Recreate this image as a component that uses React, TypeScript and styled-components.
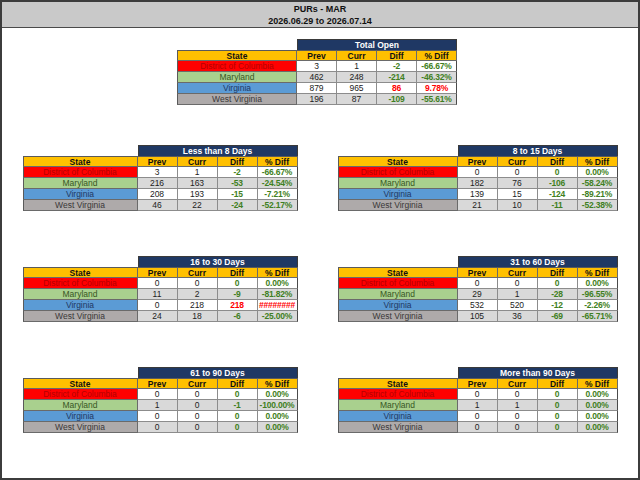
import React from "react";
import styled, { createGlobalStyle } from "styled-components";

const GlobalStyle = createGlobalStyle`
  html, body { margin: 0; padding: 0; background: #ffffff; }
  body { font-family: "Liberation Sans", Arial, sans-serif; }
  * { box-sizing: border-box; }
`;

type Row = { prev: string; curr: string; diff: string; pct: string };
type TableData = { title: string; rows: Row[] };

const STATES = [
  { name: "District of Columbia", bg: "#ff0000", fg: "#b40000" },
  { name: "Maryland", bg: "#a9d08e", fg: "#375623" },
  { name: "Virginia", bg: "#5b9bd5", fg: "#1f3864" },
  { name: "West Virginia", bg: "#aeaaaa", fg: "#3a3838" },
];

const r = (prev: string, curr: string, diff: string, pct: string): Row => ({ prev, curr, diff, pct });

const TOTAL: TableData = {
  title: "Total Open",
  rows: [r("3", "1", "-2", "-66.67%"), r("462", "248", "-214", "-46.32%"), r("879", "965", "86", "9.78%"), r("196", "87", "-109", "-55.61%")],
};

const BUCKETS: TableData[] = [
  { title: "Less than 8 Days", rows: [r("3", "1", "-2", "-66.67%"), r("216", "163", "-53", "-24.54%"), r("208", "193", "-15", "-7.21%"), r("46", "22", "-24", "-52.17%")] },
  { title: "8 to 15 Days", rows: [r("0", "0", "0", "0.00%"), r("182", "76", "-106", "-58.24%"), r("139", "15", "-124", "-89.21%"), r("21", "10", "-11", "-52.38%")] },
  { title: "16 to 30 Days", rows: [r("0", "0", "0", "0.00%"), r("11", "2", "-9", "-81.82%"), r("0", "218", "218", "########"), r("24", "18", "-6", "-25.00%")] },
  { title: "31 to 60 Days", rows: [r("0", "0", "0", "0.00%"), r("29", "1", "-28", "-96.55%"), r("532", "520", "-12", "-2.26%"), r("105", "36", "-69", "-65.71%")] },
  { title: "61 to 90 Days", rows: [r("0", "0", "0", "0.00%"), r("1", "0", "-1", "-100.00%"), r("0", "0", "0", "0.00%"), r("0", "0", "0", "0.00%")] },
  { title: "More than 90 Days", rows: [r("0", "0", "0", "0.00%"), r("1", "1", "0", "0.00%"), r("0", "0", "0", "0.00%"), r("0", "0", "0", "0.00%")] },
];

const Frame = styled.div`
  width: 640px;
  height: 480px;
  border: 2px solid #3c3c3c;
  display: flex;
  flex-direction: column;
  background: #ffffff;
`;

const Header = styled.header`
  height: 26px;
  background: #c9c9c9;
  border-bottom: 1px solid #4a4a4a;
  display: flex;
  flex-direction: column;
  align-items: center;
  justify-content: center;
`;

const HeaderLine = styled.div`
  font-size: 9px;
  font-weight: bold;
  line-height: 12px;
  color: #111111;
`;

const TopRow = styled.div`
  display: flex;
  justify-content: center;
  padding-top: 11px;
  padding-right: 6px;
`;

const Grid = styled.div`
  margin-top: 40px;
  display: grid;
  grid-template-columns: 275px 280px;
  grid-auto-rows: 66px;
  column-gap: 40px;
  row-gap: 45px;
  justify-content: center;
`;

const TableGrid = styled.div<{ $stateW: number }>`
  display: grid;
  grid-template-columns: ${(p) => p.$stateW}px repeat(4, 40px);
  font-size: 8.5px;
  align-self: start;
`;

const Blank = styled.div`
  background: transparent;
`;

const TitleCell = styled.div`
  grid-column: span 4;
  height: 11px;
  line-height: 11px;
  background: #1f3864;
  color: #ffffff;
  font-weight: bold;
  text-align: center;
  border: 1px solid #3a3a3a;
  border-bottom: none;
`;

const HeadCell = styled.div<{ $first?: boolean }>`
  height: 11px;
  line-height: 10px;
  background: #ffc000;
  color: #111111;
  font-weight: bold;
  text-align: center;
  border-top: 1px solid #5a5a5a;
  border-right: 1px solid #6a6a6a;
  border-bottom: 1px solid #6a6a6a;
  border-left: ${(p) => (p.$first ? "1px solid #5a5a5a" : "none")};
`;

const StateCell = styled.div<{ $bg: string; $fg: string }>`
  height: 11px;
  line-height: 10px;
  background: ${(p) => p.$bg};
  color: ${(p) => p.$fg};
  text-align: center;
  white-space: nowrap;
  border-left: 1px solid #5a5a5a;
  border-right: 1px solid #6a6a6a;
  border-bottom: 1px solid #6a6a6a;
`;

const ValueCell = styled.div<{ $shade: boolean; $tone?: "green" | "red"; $last?: boolean }>`
  height: 11px;
  line-height: 10px;
  background: ${(p) => (p.$shade ? "#d9d9d9" : "#ffffff")};
  color: ${(p) => (p.$tone === "green" ? "#3f7f22" : p.$tone === "red" ? "#ff0000" : "#222222")};
  font-weight: ${(p) => (p.$tone ? "bold" : "normal")};
  text-align: center;
  white-space: nowrap;
  overflow: hidden;
  letter-spacing: ${(p) => (p.$tone ? "-0.2px" : "0")};
  border-right: 1px solid ${(p) => (p.$last ? "#4a4a4a" : "#8c8c8c")};
  border-bottom: 1px solid #8c8c8c;
`;

type TableProps = { data: TableData; stateW: number };

function DataTable({ data, stateW }: TableProps) {
  return (
    <TableGrid $stateW={stateW}>
      <Blank />
      <TitleCell>{data.title}</TitleCell>
      <HeadCell $first>State</HeadCell>
      <HeadCell>Prev</HeadCell>
      <HeadCell>Curr</HeadCell>
      <HeadCell>Diff</HeadCell>
      <HeadCell>% Diff</HeadCell>
      {data.rows.map((row, i) => {
        const st = STATES[i];
        const shade = i % 2 === 1;
        const tone = row.diff.startsWith("-") || row.diff === "0" ? "green" : "red";
        return (
          <React.Fragment key={st.name}>
            <StateCell $bg={st.bg} $fg={st.fg}>{st.name}</StateCell>
            <ValueCell $shade={shade}>{row.prev}</ValueCell>
            <ValueCell $shade={shade}>{row.curr}</ValueCell>
            <ValueCell $shade={shade} $tone={tone}>{row.diff}</ValueCell>
            <ValueCell $shade={shade} $tone={tone} $last>{row.pct}</ValueCell>
          </React.Fragment>
        );
      })}
    </TableGrid>
  );
}

export default function App() {
  return (
    <>
      <GlobalStyle />
      <Frame>
        <Header>
          <HeaderLine>PURs - MAR</HeaderLine>
          <HeaderLine>2026.06.29 to 2026.07.14</HeaderLine>
        </Header>
        <TopRow>
          <DataTable data={TOTAL} stateW={120} />
        </TopRow>
        <Grid>
          {BUCKETS.map((b, i) => (
            <DataTable key={b.title} data={b} stateW={i % 2 === 0 ? 115 : 120} />
          ))}
        </Grid>
      </Frame>
    </>
  );
}
